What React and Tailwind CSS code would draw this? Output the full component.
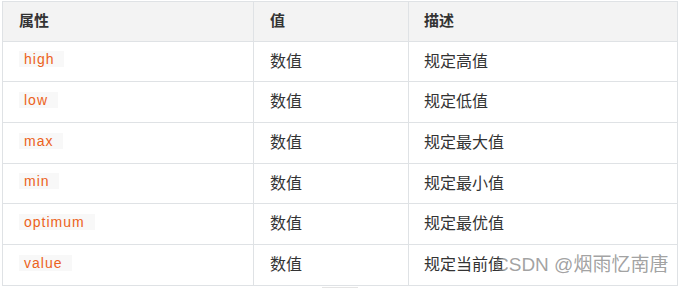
const rows = [
  { attr: 'high', value: '数值', desc: '规定高值', h: 'h-[40px]' },
  { attr: 'low', value: '数值', desc: '规定低值', h: 'h-[41px]' },
  { attr: 'max', value: '数值', desc: '规定最大值', h: 'h-[41px]' },
  { attr: 'min', value: '数值', desc: '规定最小值', h: 'h-[40px]' },
  { attr: 'optimum', value: '数值', desc: '规定最优值', h: 'h-[41px]' },
  { attr: 'value', value: '数值', desc: '规定当前值', h: 'h-[41px]' },
]

const font = 'font-["Liberation_Sans","Noto_Sans_CJK_SC",sans-serif]'

export default function App() {
  return (
    <div className={`relative h-[288px] w-[681px] overflow-hidden bg-white ${font}`}>
      <div className="ml-[2px] mt-px grid w-[676px] grid-cols-[251px_155px_269px] border-l border-t border-[#dfe2e5] text-[#333]">
        <div className="flex h-[40px] items-center border-b border-r border-[#dfe2e5] bg-[#f3f3f3] pl-4 text-[15px] font-bold">属性</div>
        <div className="flex h-[40px] items-center border-b border-r border-[#dfe2e5] bg-[#f3f3f3] pl-4 text-[15px] font-bold">值</div>
        <div className="flex h-[40px] items-center border-b border-r border-[#dfe2e5] bg-[#f3f3f3] pl-[15px] text-[15px] font-bold">描述</div>
        {rows.map((r) => (
          <div key={r.attr} className="contents">
            <div className={`flex items-center border-b border-r border-[#dfe2e5] pl-4 ${r.h}`}>
              <code className={`-mt-[5px] bg-[#f8f8f8] px-[5px] text-[14px] leading-4 tracking-[1px] text-[#ec6220] ${font}`}>
                {r.attr}{'\u00a0'}
              </code>
            </div>
            <div className={`flex items-center border-b border-r border-[#dfe2e5] pl-4 text-[16px] ${r.h}`}>{r.value}</div>
            <div className={`flex items-center border-b border-r border-[#dfe2e5] pl-[15px] text-[16px] ${r.h}`}>{r.desc}</div>
          </div>
        ))}
      </div>
      <div className="absolute left-[495px] top-[253px] text-[19px] leading-6 text-[#8a8a8a]/80">CSDN @烟雨忆南唐</div>
      <div className="absolute left-[322px] top-[287px] h-px w-[36px] bg-[#e4e4e4]" />
    </div>
  )
}
